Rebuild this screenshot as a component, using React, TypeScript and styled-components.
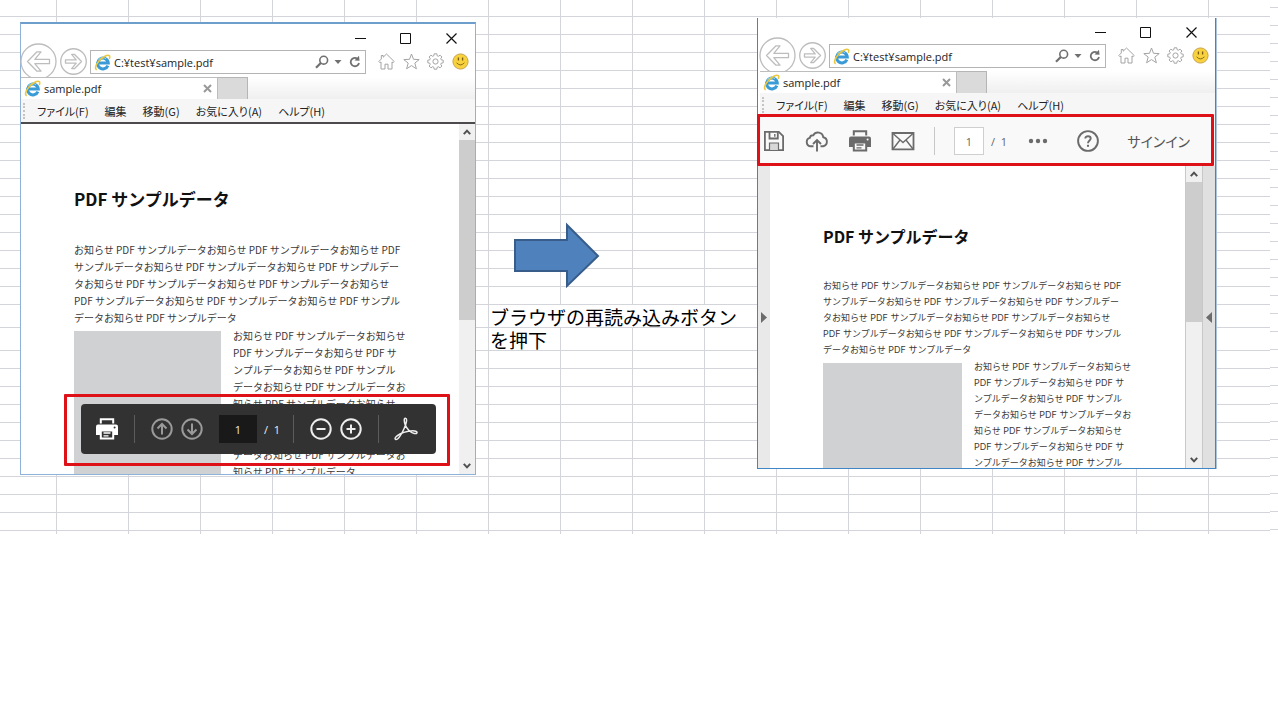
import React from "react";
import styled, { createGlobalStyle, css } from "styled-components";

const GlobalStyle = createGlobalStyle`
  *, *::before, *::after { box-sizing: border-box; }
  body {
    margin: 0;
    background: #fff;
    color: #222;
    font-family: "Open Sans", "Noto Sans CJK JP", sans-serif;
  }
  button, input { font: inherit; color: inherit; margin: 0; padding: 0; border: 0; background: none; }
  svg { display: block; flex: none; }
`;

const line = "#d3d5da";

/* Spreadsheet grid: 72px columns, 18px rows, two taller rows behind the caption. */
const Sheet = styled.main`
  display: grid;
  grid-template-columns: 456fr 281fr 459fr;
  align-items: start;
  min-height: 534px;
  padding: 0 62px 0 20px;
  background:
    linear-gradient(90deg, ${line} 1px, transparent 1px) 56px 0 / 72px 534px repeat-x,
    repeating-linear-gradient(transparent 0 16px, ${line} 16px 17px, transparent 17px 18px) 0 0 / calc(100% - 8px) 305px no-repeat,
    repeating-linear-gradient(transparent 0 22px, ${line} 22px 23px) 0 305px / calc(100% - 8px) 46px no-repeat,
    repeating-linear-gradient(transparent 0 17px, ${line} 17px 18px) 0 351px / calc(100% - 8px) 183px no-repeat,
    repeating-linear-gradient(transparent 0 7px, ${line} 7px 8px, transparent 8px 18px) 100% 0 / 8px 534px no-repeat;
`;

const Window = styled.section<{ $framed?: boolean }>`
  position: relative;
  background: #fff;
  ${(p) =>
    p.$framed
      ? css`
          margin-top: 22px;
          border: 1px solid #8fb2d8;
          border-top: 2px solid #6e9fcc;
        `
      : css`
          margin-top: 18px;
          border: 1px solid #3f86c4;
          border-top: 0;
          box-shadow: 1px 0 0 #a9c4dc;
        `}
`;

const Chrome = styled.header<{ $inset: number; $ruled?: boolean }>`
  padding-left: ${(p) => p.$inset}px;
  border-bottom: ${(p) => (p.$ruled ? "2px solid #4c4a4d" : "0")};
`;

const IconButton = styled.button<{ $w: number; $h?: number }>`
  display: flex;
  flex: none;
  align-items: center;
  justify-content: center;
  width: ${(p) => p.$w}px;
  height: ${(p) => p.$h ?? 24}px;
`;

const TitleRow = styled.div`
  display: flex;
  justify-content: flex-end;
  height: 25px;
  padding-top: 2px;
`;

const NavRow = styled.div`
  display: flex;
  align-items: flex-start;
  height: 28px;
  margin-left: -1px;
  padding-right: 3px;
`;

const RoundButton = styled.button<{ $lift: number }>`
  flex: none;
  margin-top: ${(p) => -p.$lift}px;
  margin-right: 3px;
`;

const AddressBox = styled.div`
  display: flex;
  flex: 1;
  align-items: center;
  min-width: 0;
  height: 24px;
  margin: 1px 8px 0 0;
  padding-left: 3px;
  border: 1px solid #b4b4b4;
`;

const AddressInput = styled.input`
  flex: 1;
  min-width: 0;
  height: 20px;
  margin-left: 3px;
  font-size: 11px;
`;

const TabRow = styled.div`
  position: relative;
  display: flex;
  height: 22px;
  background: linear-gradient(#fff, #efefef);
`;

const Tab = styled.div`
  display: flex;
  align-items: center;
  width: 197px;
  padding-left: 3px;
  border: solid #bdbdbd;
  border-width: 1px 1px 0 0;
  background: #fff;
  font-size: 11px;
`;

const TabTitle = styled.span`
  flex: 1;
  margin-left: 3px;
`;

const NewTab = styled.button`
  width: 30px;
  background: #dadada;
  border: solid #b5b5b5;
  border-width: 1px 1px 0 0;
`;

const MenuBar = styled.nav`
  position: relative;
  display: flex;
  align-items: center;
  gap: 16px;
  height: 23px;
  padding-left: 16px;
  background: #f6f6f6;
  &::before {
    content: "";
    position: absolute;
    left: 2px;
    top: 4px;
    bottom: 3px;
    border-left: 2px dotted #c4c4c4;
  }
`;

const MenuItem = styled.button`
  font-family: "Noto Sans CJK JP", sans-serif;
  font-size: 11px;
  line-height: 20px;
  font-feature-settings: "palt";
  white-space: nowrap;
`;

const Viewport = styled.div<{ $h: number }>`
  position: relative;
  display: flex;
  height: ${(p) => p.$h}px;
  overflow: hidden;
`;

const Paper = styled.article<{ $top: number; $font: number; $line: number; $latin?: string }>`
  flex: 1;
  min-width: 0;
  padding: ${(p) => p.$top}px 0 0 53px;
  background: #fff;
  color: #3a3a3a;
  font-family: ${(p) => (p.$latin ? `${p.$latin}, ` : "")}"Noto Sans CJK JP", sans-serif;
  font-size: ${(p) => p.$font}px;
  line-height: ${(p) => p.$line}px;
  white-space: pre;
  overflow: hidden;
`;

const Heading = styled.h1<{ $font: number }>`
  margin: 0 0 32px;
  color: #111;
  font-family: "Noto Sans CJK JP", sans-serif;
  font-size: ${(p) => p.$font}px;
  font-weight: 700;
  line-height: 20px;
`;

const Paragraph = styled.p`
  margin: 0;
`;

const Figure = styled.div`
  display: flex;
  gap: 12px;
  margin-top: 1px;
`;

const Placeholder = styled.div<{ $w: number }>`
  flex: none;
  width: ${(p) => p.$w}px;
  margin-top: 4px;
  background: #d0d1d3;
`;

const Scrollbar = styled.div<{ $line?: boolean }>`
  display: flex;
  flex: none;
  flex-direction: column;
  width: ${(p) => (p.$line ? 18 : 16)}px;
  background: #f0f0f0;
  border: solid #c8c8c8;
  border-width: 0 ${(p) => (p.$line ? "1px" : "0")};
`;

const Thumb = styled.div<{ $h: number }>`
  height: ${(p) => p.$h}px;
  margin-bottom: auto;
  background: #cdcdcd;
`;

const SideHandle = styled.button<{ $tone: string }>`
  display: flex;
  flex: none;
  align-items: center;
  justify-content: center;
  width: 12px;
  background: ${(p) => p.$tone};
`;

const FloatBar = styled.div`
  position: absolute;
  left: 60px;
  bottom: 20px;
  display: flex;
  align-items: center;
  width: 355px;
  height: 50px;
  padding: 0 11px;
  border-radius: 4px;
  background: #323232;
  color: #eee;
  font-size: 11px;
`;

const ToolGroup = styled.div<{ $gap?: number; $l?: number; $r?: number }>`
  display: flex;
  flex: none;
  align-items: center;
  gap: ${(p) => p.$gap ?? 0}px;
  margin: 0 ${(p) => p.$r ?? 0}px 0 ${(p) => p.$l ?? 0}px;
`;

const Divider = styled.div<{ $tone: string; $space: number }>`
  flex: none;
  width: 1px;
  height: 28px;
  margin: 0 ${(p) => p.$space}px;
  background: ${(p) => p.$tone};
`;

const PageInput = styled.input<{ $dark?: boolean }>`
  flex: none;
  width: ${(p) => (p.$dark ? 38 : 30)}px;
  height: 28px;
  text-align: center;
  background: ${(p) => (p.$dark ? "#191919" : "#fff")};
  border: ${(p) => (p.$dark ? "0" : "1px solid #cfcfcf")};
`;

const PageTotal = styled.span`
  flex: none;
  width: 17px;
  white-space: pre;
`;

const AcrobatBar = styled.div`
  display: flex;
  align-items: center;
  height: 50px;
  padding-left: 4px;
  background: #f9f9f9;
  color: #666;
  font-size: 11px;
`;

const SignIn = styled.button`
  margin: 0 25px 0 auto;
  color: #555;
  font-family: "Noto Sans CJK JP", sans-serif;
  font-size: 14px;
  font-feature-settings: "palt";
  white-space: nowrap;
`;

const Callout = styled.div<{ $left: number; $right: number; $top: number; $h: number }>`
  position: absolute;
  left: ${(p) => p.$left}px;
  right: ${(p) => p.$right}px;
  top: ${(p) => p.$top}px;
  height: ${(p) => p.$h}px;
  border: 3px solid #de1018;
  border-radius: 1px;
  pointer-events: none;
`;

const Step = styled.div`
  padding: 222px 0 0 13px;
`;

const Caption = styled.p`
  margin: 14px 0 0;
  padding: 1px 0 0 1px;
  background: linear-gradient(#fff, #fff) 0 1px / 100% 22px no-repeat;
  color: #000;
  font-family: "Noto Sans CJK JP", sans-serif;
  font-size: 19px;
  line-height: 23px;
  white-space: pre;
`;

const ArrowDrawing = styled.svg`
  margin-left: 23px;
`;

const IeIcon = () => (
  <svg width="17" height="17" viewBox="0 0 17 17" fill="none">
    <path d="M13.900 11.600A5.400 5.400 0 1 1 14.300 9.100H4.600" stroke="#3a9bd6" strokeWidth="3" />
    <path d="M4.400 5.600A5.400 5.400 0 0 1 12 4.800" stroke="#8fd0ef" strokeWidth="1" />
    <path d="M2.800 15.600C.6 15.200 1.400 11 5 7C8.800 2.800 13.600 .4 15.200 1.600C16 2.300 15.800 3.600 15.200 4.900" stroke="#e9c840" strokeWidth="1.600" />
  </svg>
);

const CircleArrow = ({ size, flip }: { size: number; flip?: boolean }) => (
  <svg width={size} height={size} viewBox="0 0 37 37" fill="none" stroke="#bdbdbd" strokeWidth={flip ? 1.8 : 1.3}>
    <circle cx="18.500" cy="18.500" r="17.500" />
    <path
      transform={flip ? "matrix(-1 0 0 1 37 0)" : undefined}
      d="M7.500 18.500L17 8.800H21L14.800 16.300H29.500V20.700H14.800L21 28.200H17Z"
      strokeLinejoin="round"
    />
  </svg>
);

const Search = () => (
  <svg width="14" height="14" viewBox="0 0 14 14" fill="none" stroke="#707070">
    <circle cx="8.700" cy="5.200" r="3.900" strokeWidth="1.600" />
    <path d="M5.800 8L1 12.800" strokeWidth="2.200" />
  </svg>
);

const Reload = () => (
  <svg width="14" height="14" viewBox="0 0 14 14" fill="none" stroke="#707070">
    <path d="M9 3.400A4.200 4.200 0 1 0 11 8" strokeWidth="1.800" />
    <path d="M6.500 5.600L11.500 5.800L11 .8Z" fill="#707070" stroke="none" />
  </svg>
);

const Home = () => (
  <svg width="17" height="17" viewBox="0 0 17 17" fill="none" stroke="#a4a4a4" strokeLinejoin="round">
    <path d="M8.500 1L16.200 8.500L15 9.800L14 8.900V16H10V11.200H7V16H3V8.900L2 9.800L.8 8.500L3.300 6V2.500H5.200V4.200Z" />
  </svg>
);

const Star = () => (
  <svg width="17" height="17" viewBox="0 0 17 17" fill="none" stroke="#a4a4a4" strokeLinejoin="miter">
    <path d="M8.500 1L10.500 6.300L16.200 6.600L11.800 10.100L13.400 15.800L8.500 12.600L3.600 15.800L5.200 10.100L.8 6.600L6.500 6.300Z" />
  </svg>
);

const Gear = () => (
  <svg width="17" height="17" viewBox="0 0 17 17" fill="none" stroke="#a4a4a4">
    <path d="M7.200 .8H9.800L10.200 2.800L11.300 3.300L13.100 2.200L14.900 4L13.700 5.700L14.200 6.800L16.200 7.200V9.800L14.200 10.200L13.700 11.300L14.900 13L13.100 14.800L11.300 13.700L10.200 14.200L9.800 16.200H7.200L6.800 14.200L5.700 13.700L3.900 14.800L2.100 13L3.300 11.300L2.800 10.200L.8 9.800V7.200L2.800 6.800L3.300 5.700L2.100 4L3.900 2.200L5.700 3.300L6.800 2.800Z" />
    <circle cx="8.500" cy="8.500" r="2.600" />
  </svg>
);

const Smiley = () => (
  <svg width="17" height="17" viewBox="0 0 17 17" fill="none">
    <circle cx="8.500" cy="8.500" r="7.600" fill="#f7d23c" stroke="#c9a24a" />
    <path d="M6.400 4.600V7.400M10.600 4.600V7.400" stroke="#7a5a18" strokeWidth="1.300" />
    <path d="M4.600 9.800Q8.500 14 12.400 9.800" stroke="#8a6a1c" />
  </svg>
);

const Chevron = ({ down }: { down?: boolean }) => (
  <svg width="8" height="6" viewBox="0 0 8 6" fill="none" stroke="#505050" strokeWidth="2">
    <path d={down ? "M.8 .8L4 4.300L7.200 .8" : "M.8 5.200L4 1.700L7.200 5.200"} />
  </svg>
);

const Printer = ({ color, paper }: { color: string; paper: string }) => (
  <svg width="24" height="24" viewBox="0 0 24 24" fill="none">
    <path d="M5.800 6.500V2.200H18.200V6.500" stroke={color} strokeWidth="2" fill={paper} />
    <path d="M3 7.500H21Q23 7.500 23 9.500V18H1V9.500Q1 7.500 3 7.500Z" fill={color} />
    <path d="M5.800 13.500H18.200V21.600H5.800Z" fill={paper} stroke={color} strokeWidth="2" />
    <path d="M8.500 16H15.500M8.500 18.800H13.500" stroke={color} strokeWidth="1.300" />
    <circle cx="19.600" cy="10.500" r="1" fill={paper} />
  </svg>
);

const Ring = ({ color, d }: { color: string; d: string }) => (
  <svg width="22" height="22" viewBox="0 0 22 22" fill="none" stroke={color} strokeWidth="2">
    <circle cx="11" cy="11" r="9.700" />
    <path d={d} />
  </svg>
);

const Acrobat = () => (
  <svg width="24" height="24" viewBox="0 0 24 24" fill="none" stroke="#eee" strokeWidth="1.500">
    <path d="M11.300 1.200C9.800 1.200 10 4.500 11.300 8C12.600 11.500 16.300 15.800 20.300 16.500C23.300 17 23.800 15 21.800 14.200C18.500 12.900 10.500 14.700 6 17C1.800 19.100 .2 21.500 1.500 22.400C3.200 23.500 6.200 19.500 8.700 14.500C11 10 12.600 5.500 12.600 3C12.600 1.700 12 1.200 11.300 1.200Z" />
  </svg>
);

const Save = () => (
  <svg width="22" height="22" viewBox="0 0 22 22" fill="none" stroke="#6b6b6b" strokeWidth="1.800">
    <path d="M1.900 1.900H15.800L20.100 6.200V20.100H1.900Z" />
    <path d="M6.500 2V8.500H14.800V2" />
    <path d="M11.800 4V6.800" strokeWidth="1.400" />
    <path d="M6.500 20V13H15.500V20" fill="#d8d8d8" strokeWidth="1.200" />
  </svg>
);

const Cloud = () => (
  <svg width="24" height="24" viewBox="0 0 24 24" fill="none" stroke="#6b6b6b" strokeWidth="1.900">
    <path d="M8.500 17.300H5.800A4.300 4.300 0 0 1 4.800 8.900A3.300 3.300 0 0 1 8.300 6.200A5.400 5.400 0 0 1 18.300 8.300A4.600 4.600 0 0 1 18.200 17.300H15.500" />
    <path d="M12 22.500V11.500M8 15L12 11L16 15" />
  </svg>
);

const Mail = () => (
  <svg width="24" height="24" viewBox="0 0 24 24" fill="none" stroke="#6b6b6b" strokeWidth="1.400">
    <path d="M1.500 4H22.500V20.300H1.500Z" strokeWidth="1.800" />
    <path d="M2 4.500L12 13.500L22 4.500M2 20L9 11M22 20L15 11" />
  </svg>
);

const Dots = () => (
  <svg width="20" height="6" viewBox="0 0 20 6" fill="#6b6b6b">
    <circle cx="3" cy="3" r="2.200" />
    <circle cx="10" cy="3" r="2.200" />
    <circle cx="17" cy="3" r="2.200" />
  </svg>
);

const Help = () => (
  <svg width="22" height="22" viewBox="0 0 22 22" fill="none" stroke="#6b6b6b" strokeWidth="1.900">
    <circle cx="11" cy="11" r="9.900" />
    <path d="M8.300 8.600C8.300 5.300 13.700 5.500 13.700 8.500C13.700 10.500 11 10.500 11 13.200" />
    <path d="M11 14.800V16.800" strokeWidth="2.100" />
  </svg>
);

const Side = ({ left }: { left?: boolean }) => (
  <svg width="6" height="11" viewBox="0 0 6 11" fill="#6b6b6b">
    <path d={left ? "M6 0V11L0 5.500Z" : "M0 0V11L6 5.500Z"} />
  </svg>
);

const menus = ["ファイル(F)", "編集", "移動(G)", "お気に入り(A)", "ヘルプ(H)"];

const intro = [
  "お知らせ PDF サンプルデータお知らせ PDF サンプルデータお知らせ PDF",
  "サンプルデータお知らせ PDF サンプルデータお知らせ PDF サンプルデー",
  "タお知らせ PDF サンプルデータお知らせ PDF サンプルデータお知らせ",
  "PDF サンプルデータお知らせ PDF サンプルデータお知らせ PDF サンプル",
  "データお知らせ PDF サンプルデータ",
].join("\n");

const aside = [
  "お知らせ PDF サンプルデータお知らせ",
  "PDF サンプルデータお知らせ PDF サ",
  "ンプルデータお知らせ PDF サンプル",
  "データお知らせ PDF サンプルデータお",
  "知らせ PDF サンプルデータお知らせ",
  "PDF サンプルデータお知らせ PDF サ",
  "ンプルデータお知らせ PDF サンプル",
  "データお知らせ PDF サンプルデータお",
  "知らせ PDF サンプルデータ",
];

const BrowserChrome = ({ inset, ruled }: { inset: number; ruled?: boolean }) => (
  <Chrome $inset={inset} $ruled={ruled}>
    <TitleRow>
      <IconButton $w={45} aria-label="最小化">
        <svg width="11" height="11" stroke="#111"><path d="M0 5.500H11" /></svg>
      </IconButton>
      <IconButton $w={45} aria-label="最大化">
        <svg width="11" height="11" fill="none" stroke="#111"><path d="M.5 .5H10.500V10.500H.5Z" /></svg>
      </IconButton>
      <IconButton $w={47} aria-label="閉じる">
        <svg width="11" height="11" stroke="#111" strokeWidth="1.200"><path d="M.5 .5L10.500 10.500M10.500 .5L.5 10.500" /></svg>
      </IconButton>
    </TitleRow>
    <NavRow>
      <RoundButton $lift={6} aria-label="戻る"><CircleArrow size={37} /></RoundButton>
      <RoundButton $lift={1} aria-label="進む"><CircleArrow size={27} flip /></RoundButton>
      <AddressBox>
        <IeIcon />
        <AddressInput aria-label="アドレス" defaultValue="C:¥test¥sample.pdf" />
        <IconButton $w={18} $h={20} aria-label="検索"><Search /></IconButton>
        <IconButton $w={14} $h={20} aria-label="候補">
          <svg width="8" height="4" fill="#707070"><path d="M.5 0H7.500L4 4Z" /></svg>
        </IconButton>
        <IconButton $w={20} $h={20} aria-label="更新"><Reload /></IconButton>
      </AddressBox>
      <IconButton $w={25} aria-label="ホーム"><Home /></IconButton>
      <IconButton $w={24} aria-label="お気に入り"><Star /></IconButton>
      <IconButton $w={25} aria-label="ツール"><Gear /></IconButton>
      <IconButton $w={24} aria-label="フィードバック"><Smiley /></IconButton>
    </NavRow>
    <TabRow>
      <Tab>
        <IeIcon />
        <TabTitle>sample.pdf</TabTitle>
        <IconButton $w={20} $h={20} aria-label="タブを閉じる">
          <svg width="9" height="9" stroke="#999" strokeWidth="2"><path d="M1 1L8 8M8 1L1 8" /></svg>
        </IconButton>
      </Tab>
      <NewTab aria-label="新しいタブ" />
    </TabRow>
    <MenuBar>
      {menus.map((m) => (
        <MenuItem key={m}>{m}</MenuItem>
      ))}
    </MenuBar>
  </Chrome>
);

const Scroll = ({ thumb, ruled }: { thumb: number; ruled?: boolean }) => (
  <Scrollbar $line={ruled}>
    <IconButton $w={16} $h={16} aria-label="上へ"><Chevron /></IconButton>
    <Thumb $h={thumb} />
    <IconButton $w={16} $h={16} aria-label="下へ"><Chevron down /></IconButton>
  </Scrollbar>
);

export default function App() {
  return (
    <>
      <GlobalStyle />
      <Sheet>
        <Window $framed>
          <BrowserChrome inset={0} ruled />
          <Viewport $h={350}>
            <Paper $top={65} $font={10} $line={17}>
              <Heading $font={17}>PDF サンプルデータ</Heading>
              <Paragraph>{intro}</Paragraph>
              <Figure>
                <Placeholder $w={147} />
                <Paragraph>{aside.join("\n")}</Paragraph>
              </Figure>
            </Paper>
            <Scroll thumb={180} />
            <FloatBar>
              <IconButton $w={30} aria-label="印刷"><Printer color="#fff" paper="#323232" /></IconButton>
              <Divider $tone="#5c5c5c" $space={12} />
              <IconButton $w={30} aria-label="前のページ"><Ring color="#9a9a9a" d="M11 16.500V6.500M6.500 10.500L11 6L15.500 10.500" /></IconButton>
              <IconButton $w={30} aria-label="次のページ"><Ring color="#9a9a9a" d="M11 5.500V15.500M6.500 11.500L11 16L15.500 11.500" /></IconButton>
              <ToolGroup $gap={7} $l={12}>
                <PageInput $dark aria-label="ページ" defaultValue="1" />
                <PageTotal>/  1</PageTotal>
              </ToolGroup>
              <Divider $tone="#5c5c5c" $space={12} />
              <IconButton $w={30} aria-label="縮小"><Ring color="#eee" d="M6.500 11H15.500" /></IconButton>
              <IconButton $w={30} aria-label="拡大"><Ring color="#eee" d="M6.500 11H15.500M11 6.500V15.500" /></IconButton>
              <Divider $tone="#5c5c5c" $space={12} />
              <IconButton $w={30} aria-label="Acrobat"><Acrobat /></IconButton>
            </FloatBar>
          </Viewport>
          <Callout $left={43} $right={25} $top={370} $h={72} />
        </Window>

        <Step>
          <ArrowDrawing width="88" height="68" viewBox="0 0 88 68">
            <path d="M3 18H55V3L86 34L55 64V49H3Z" fill="#4f81bd" stroke="#385d8a" strokeWidth="2" />
          </ArrowDrawing>
          <Caption>{"ブラウザの再読み込みボタン\nを押下"}</Caption>
        </Step>

        <Window>
          <BrowserChrome inset={2} />
          <AcrobatBar>
            <ToolGroup $gap={19}>
              <IconButton $w={24} aria-label="保存"><Save /></IconButton>
              <IconButton $w={24} aria-label="アップロード"><Cloud /></IconButton>
              <IconButton $w={24} aria-label="印刷"><Printer color="#6b6b6b" paper="#f9f9f9" /></IconButton>
              <IconButton $w={24} aria-label="メール"><Mail /></IconButton>
            </ToolGroup>
            <Divider $tone="#c8c8c8" $space={19} />
            <ToolGroup $gap={7}>
              <PageInput aria-label="ページ" defaultValue="1" />
              <PageTotal>/  1</PageTotal>
            </ToolGroup>
            <ToolGroup $gap={26} $l={18}>
              <IconButton $w={24} aria-label="その他"><Dots /></IconButton>
              <IconButton $w={24} aria-label="ヘルプ"><Help /></IconButton>
            </ToolGroup>
            <SignIn>サインイン</SignIn>
          </AcrobatBar>
          <Viewport $h={302}>
            <SideHandle $tone="#e9e9e9" aria-label="左パネル"><Side /></SideHandle>
            <Paper $top={60} $font={9} $line={16} $latin="Inter">
              <Heading $font={16}>PDF サンプルデータ</Heading>
              <Paragraph>{intro}</Paragraph>
              <Figure>
                <Placeholder $w={139} />
                <Paragraph>{aside.slice(0, 7).join("\n")}</Paragraph>
              </Figure>
            </Paper>
            <Scroll thumb={140} ruled />
            <SideHandle $tone="#e0e0e0" aria-label="右パネル"><Side left /></SideHandle>
          </Viewport>
          <Callout $left={-1} $right={1} $top={96} $h={52} />
        </Window>
      </Sheet>
    </>
  );
}
